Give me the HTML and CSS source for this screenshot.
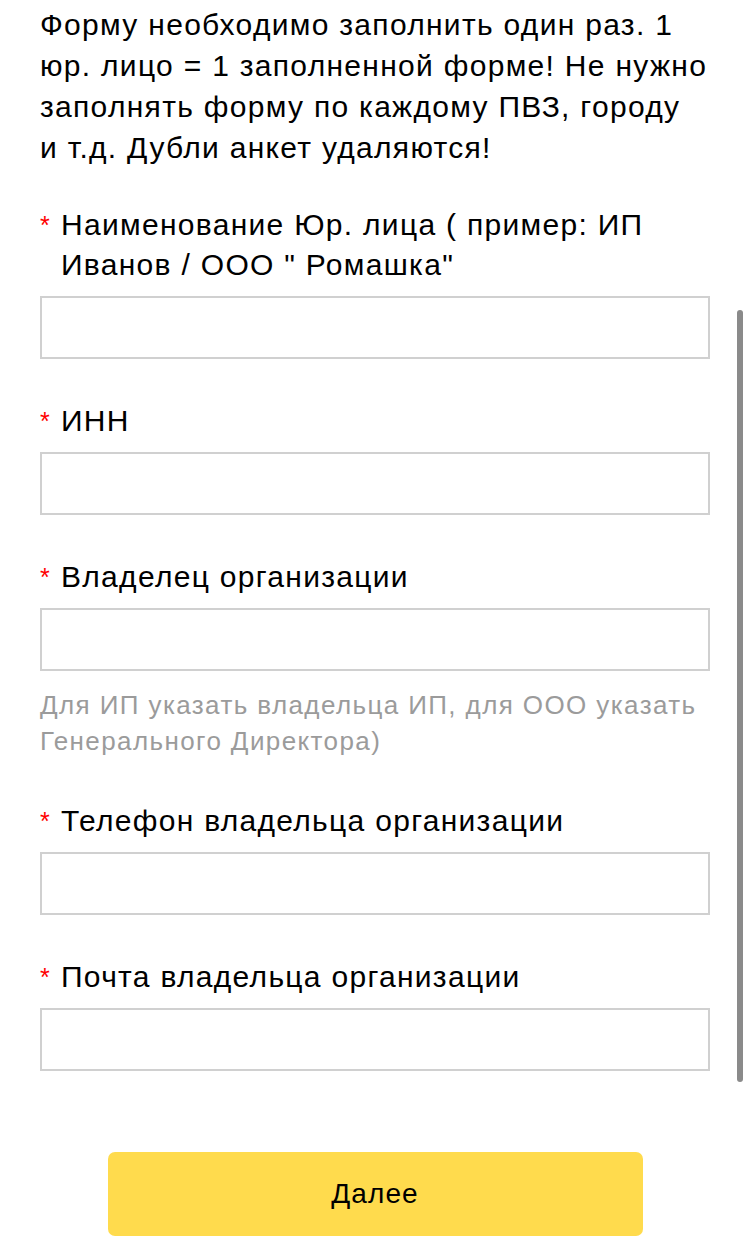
FILE: index.html
```html
<!DOCTYPE html>
<html lang="ru">
<head>
<meta charset="utf-8">
<link rel="stylesheet" href="styles.css">
</head>
<body>
<div class="page">
  <p class="intro">Форму необходимо заполнить один раз. 1 юр. лицо = 1 заполненной форме! Не нужно заполнять форму по каждому ПВЗ, городу и&nbsp;т.д. Дубли анкет удаляются!</p>
  <form class="form">
    <div class="field">
      <label class="label"><span class="req">*</span><span class="label-text">Наименование Юр. лица ( пример: ИП Иванов / ООО " Ромашка"</span></label>
      <div class="input"></div>
    </div>
    <div class="field">
      <label class="label"><span class="req">*</span><span class="label-text">ИНН</span></label>
      <div class="input"></div>
    </div>
    <div class="field">
      <label class="label"><span class="req">*</span><span class="label-text">Владелец организации</span></label>
      <div class="input"></div>
      <div class="hint">Для ИП указать владельца ИП, для ООО указать Генерального Директора)</div>
    </div>
    <div class="field">
      <label class="label"><span class="req">*</span><span class="label-text">Телефон владельца организации</span></label>
      <div class="input"></div>
    </div>
    <div class="field">
      <label class="label"><span class="req">*</span><span class="label-text">Почта владельца организации</span></label>
      <div class="input"></div>
    </div>
    <div class="actions">
      <div class="btn">Далее</div>
    </div>
  </form>
</div>
<div class="scrollbar"></div>
</body>
</html>
```
FILE: styles.css
```css
html, body {
  margin: 0;
  padding: 0;
  background: #fff;
}
body {
  font-family: "Liberation Sans", Arial, sans-serif;
  color: #000;
  overflow: hidden;
}
.page {
  padding: 0 40px;
}
.intro {
  margin: 0;
  padding-top: 4px;
  font-size: 30px;
  line-height: 41px;
  letter-spacing: 1.3px;
}
.form {
  margin-top: 37px;
}
.field {
  margin-bottom: 42px;
}
.label {
  display: flex;
  font-size: 30px;
  line-height: 40px;
  letter-spacing: 1.3px;
}
.req {
  color: #f00;
  width: 21px;
  flex: none;
  font-size: 25px;
  letter-spacing: 0;
}
.label-text {
  flex: 1;
}
.input {
  margin-top: 11px;
  height: 59px;
  border: 2px solid #d0d0d0;
}
.hint {
  margin-top: 16px;
  font-size: 26px;
  line-height: 36px;
  letter-spacing: 1.4px;
  color: #9b9b9b;
}
.actions {
  display: flex;
  justify-content: center;
  padding-top: 39px;
}
.btn {
  width: 535px;
  height: 84px;
  background: #ffdb4d;
  border-radius: 7px;
  display: flex;
  align-items: center;
  justify-content: center;
  font-size: 28px;
  letter-spacing: 1.1px;
}
.scrollbar {
  position: absolute;
  left: 737px;
  top: 310px;
  width: 6px;
  height: 772px;
  border-radius: 3px;
  background: #8a8a8a;
}
```
